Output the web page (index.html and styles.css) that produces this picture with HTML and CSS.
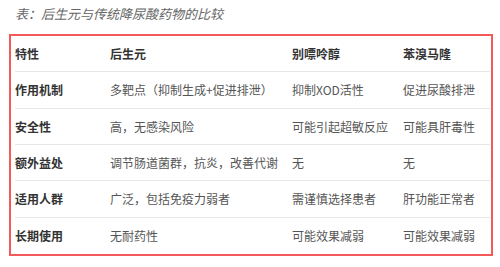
FILE: index.html
```html
<!DOCTYPE html>
<html lang="zh-CN">
<head>
<meta charset="utf-8">
<link rel="stylesheet" href="styles.css">
</head>
<body>
<p class="caption">表：后生元与传统降尿酸药物的比较</p>
<div class="box">
  <div class="row head">
    <div>特性</div><div>后生元</div><div>别嘌呤醇</div><div>苯溴马隆</div>
  </div>
  <div class="row">
    <div class="key">作用机制</div><div>多靶点（抑制生成+促进排泄）</div><div>抑制XOD活性</div><div>促进尿酸排泄</div>
  </div>
  <div class="row">
    <div class="key">安全性</div><div>高，无感染风险</div><div>可能引起超敏反应</div><div>可能具肝毒性</div>
  </div>
  <div class="row">
    <div class="key">额外益处</div><div>调节肠道菌群，抗炎，改善代谢</div><div>无</div><div>无</div>
  </div>
  <div class="row">
    <div class="key">适用人群</div><div>广泛，包括免疫力弱者</div><div>需谨慎选择患者</div><div>肝功能正常者</div>
  </div>
  <div class="row last">
    <div class="key">长期使用</div><div>无耐药性</div><div>可能效果减弱</div><div>可能效果减弱</div>
  </div>
</div>
</body>
</html>
```
FILE: styles.css
```css
html, body {
  margin: 0;
  padding: 0;
  background: #ffffff;
}
body {
  font-family: "Noto Sans CJK SC", "Noto Sans", sans-serif;
  width: 500px;
  height: 267px;
  overflow: hidden;
}
.caption {
  margin: 0;
  padding: 5px 0 0 15px;
  height: 34px;
  box-sizing: border-box;
  font-size: 13px;
  line-height: 18px;
  font-style: italic;
  color: #666666;
}
.box {
  margin-left: 9px;
  width: 484px;
  height: 222px;
  box-sizing: border-box;
  border: 2px solid #f45a5a;
  padding: 0 1px 0 4px;
  display: flex;
  flex-direction: column;
}
.row {
  display: grid;
  grid-template-columns: 95px 182px 111px 1fr;
  align-items: center;
  height: 36.33px;
  box-sizing: border-box;
  border-bottom: 1px solid #e6e6e6;
  font-size: 12px;
  color: #555555;
  white-space: nowrap;
}
.row.last {
  border-bottom: none;
}
.head {
  font-weight: bold;
  color: #333333;
}
.key {
  font-weight: bold;
  color: #333333;
}
```
